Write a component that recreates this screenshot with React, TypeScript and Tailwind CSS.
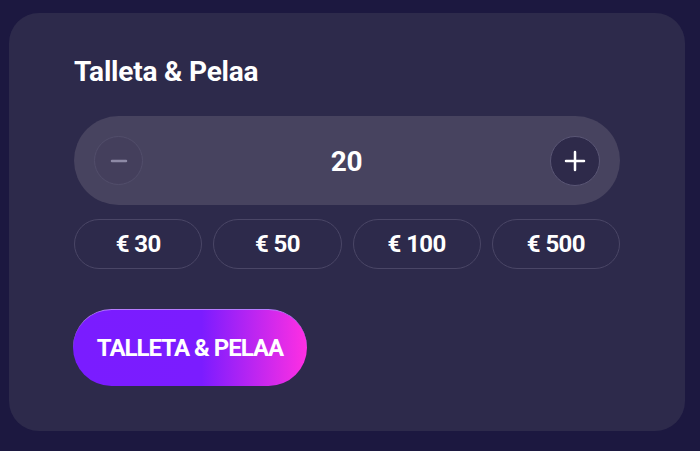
import React from "react";

export default function App() {
  const amounts = ["€ 30", "€ 50", "€ 100", "€ 500"];
  return (
    <div className="w-[700px] h-[451px] bg-[#1c1840] pt-[13px] pl-[9px]" style={{ fontFamily: "Roboto, 'Liberation Sans', sans-serif" }}>
      <div className="w-[676px] h-[418px] rounded-[30px] bg-[#2d2a4b] pl-[65px] pr-[65px] pt-[42px]">
        <h1 className="text-[28px] leading-[34px] font-bold text-white tracking-[-0.2px]">Talleta &amp; Pelaa</h1>
        <div className="mt-[27px] h-[89px] w-[546px] rounded-full bg-[#47435f] flex items-center justify-between px-[20px]">
          <button className="w-[49px] h-[49px] rounded-full border border-[#524e6b] bg-[#443f5c] flex items-center justify-center">
            <svg width="18" height="18" viewBox="0 0 18 18"><line x1="2" y1="9" x2="16" y2="9" stroke="#8e8aa6" strokeWidth="2.5" strokeLinecap="round" /></svg>
          </button>
          <span className="text-[28px] leading-[34px] font-bold text-white tracking-[-0.3px] pt-[3px]">20</span>
          <button className="w-[50px] h-[50px] rounded-full border border-[#5a5675] bg-[#2e2a4a] flex items-center justify-center">
            <svg width="22" height="22" viewBox="0 0 22 22"><line x1="2" y1="11" x2="20" y2="11" stroke="#ffffff" strokeWidth="2.5" strokeLinecap="round" /><line x1="11" y1="2" x2="11" y2="20" stroke="#ffffff" strokeWidth="2.5" strokeLinecap="round" /></svg>
          </button>
        </div>
        <div className="mt-[14px] grid grid-cols-4 gap-[11px] w-[546px]">
          {amounts.map((a) => (
            <button key={a} className="h-[50px] rounded-full border border-[#4a4666] text-white text-[24px] font-bold tracking-[-0.6px]">{a}</button>
          ))}
        </div>
        <button className="mt-[40px] ml-[-1px] w-[234px] h-[77px] rounded-full text-white text-[24px] font-bold tracking-[-1px] bg-[linear-gradient(90deg,#7a1cff_0%,#7b1cff_55%,#ff2fe2_100%)] border-t border-[#b67cff]">
          TALLETA &amp; PELAA
        </button>
      </div>
    </div>
  );
}
